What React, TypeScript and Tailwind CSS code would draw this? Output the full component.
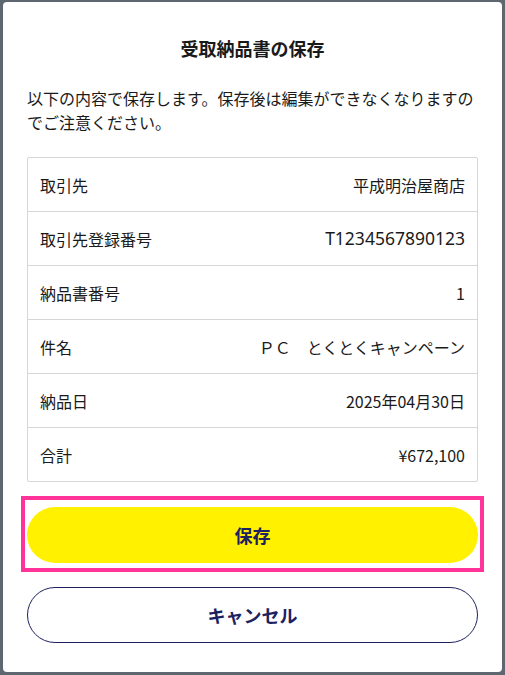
import React from 'react';

const rows: { label: string; value: string; latin?: boolean }[] = [
  { label: '取引先', value: '平成明治屋商店' },
  { label: '取引先登録番号', value: 'T1234567890123', latin: true },
  { label: '納品書番号', value: '1' },
  { label: '件名', value: 'ＰＣ　とくとくキャンペーン' },
  { label: '納品日', value: '2025年04月30日' },
  { label: '合計', value: '¥672,100' },
];

export default function App() {
  return (
    <div
      className="min-h-[675px] w-[505px] bg-[#5e6670] pt-[2px] pl-[3px]"
      style={{ fontFamily: '"Noto Sans CJK JP", "Noto Sans", sans-serif' }}
    >
      <div className="flex h-[670px] w-[499px] flex-col rounded-[4px] bg-white px-6 pt-8 text-[#1a1a1a]">
        <h2 className="text-center text-[18px] font-bold leading-7">受取納品書の保存</h2>

        <p className="mt-6 text-base leading-6">
          以下の内容で保存します。保存後は編集ができなくなりますのでご注意ください。
        </p>

        <div className="mt-[23px] rounded-[2px] border border-[#d6d6d6]">
          {rows.map((row, i) => (
            <div
              key={row.label}
              className={`flex h-[53px] items-center justify-between px-3 text-base ${
                i < rows.length - 1 ? 'box-content border-b border-[#d6d6d6]' : ''
              }`}
            >
              <span>{row.label}</span>
              {row.latin ? (
                <span className="text-[17.5px] font-['Noto_Sans',sans-serif]">{row.value}</span>
              ) : (
                <span>{row.value}</span>
              )}
            </div>
          ))}
        </div>

        <div className="-mx-1.5 mt-[14px] border-4 border-[#ff3399] px-[2px] pt-[7px] pb-[5px]">
          <button
            type="button"
            className="flex h-14 w-full items-center justify-center rounded-full bg-[#fff100] text-[18px] font-bold text-[#1d2160]"
          >
            保存
          </button>
        </div>

        <button
          type="button"
          className="mt-[15px] flex h-14 w-full items-center justify-center rounded-full border border-[#1d2160] bg-white text-[18px] font-bold text-[#1d2160]"
        >
          キャンセル
        </button>
      </div>
    </div>
  );
}
